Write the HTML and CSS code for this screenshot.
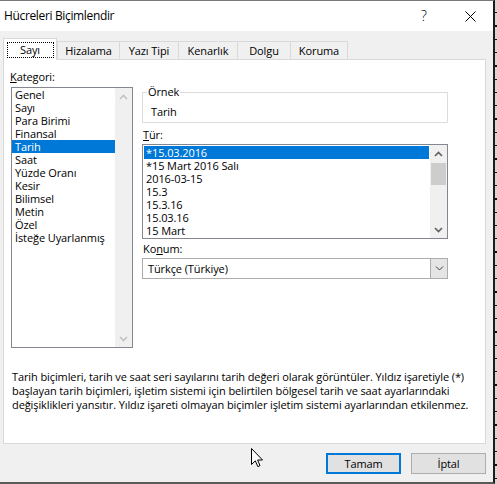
FILE: index.html
```html
<!DOCTYPE html>
<html lang="tr">
<head>
<meta charset="utf-8">
<title>Hücreleri Biçimlendir</title>
<link rel="stylesheet" href="styles.css">
</head>
<body>
<div class="dialog">
  <div class="titlebar">
    <span class="title">Hücreleri Biçimlendir</span>
    <span class="caption-btn help">?</span>
    <span class="caption-btn close">
      <svg width="11" height="11" viewBox="0 0 11 11"><path d="M0.5 0.5 L10.5 10.5 M10.5 0.5 L0.5 10.5" stroke="#000" stroke-width="1" fill="none"/></svg>
    </span>
  </div>
  <div class="content">
    <div class="tabs">
      <div class="tab active tab-sayi"><span class="focus">Sayı</span></div>
      <div class="tab tab-hiz">Hizalama</div>
      <div class="tab tab-yazi">Yazı Tipi</div>
      <div class="tab tab-ken">Kenarlık</div>
      <div class="tab tab-dol">Dolgu</div>
      <div class="tab tab-kor">Koruma</div>
    </div>
    <div class="panel">
      <div class="cols">
        <div class="left">
          <div class="label label-kat"><u>K</u>ategori:</div>
          <div class="listbox cat">
            <ul class="items">
              <li>Genel</li>
              <li>Sayı</li>
              <li>Para Birimi</li>
              <li>Finansal</li>
              <li class="sel">Tarih</li>
              <li>Saat</li>
              <li>Yüzde Oranı</li>
              <li>Kesir</li>
              <li>Bilimsel</li>
              <li>Metin</li>
              <li>Özel</li>
              <li>İsteğe Uyarlanmış</li>
            </ul>
            <div class="scrollbar disabled">
              <span class="sbtn"><svg width="9" height="6" viewBox="0 0 9 6"><path d="M1 5 L4.5 1.5 L8 5" fill="none" stroke="#c2c2c2" stroke-width="1.6"/></svg></span>
              <span class="track"></span>
              <span class="sbtn"><svg width="9" height="6" viewBox="0 0 9 6"><path d="M1 1 L4.5 4.5 L8 1" fill="none" stroke="#c2c2c2" stroke-width="1.6"/></svg></span>
            </div>
          </div>
        </div>
        <div class="right">
          <div class="group">
            <span class="legend">Örnek</span>
            <div class="sample">Tarih</div>
          </div>
          <div class="label label-tur"><u>T</u>ür:</div>
          <div class="listbox tur">
            <ul class="items">
              <li class="sel">*15.03.2016</li>
              <li>*15 Mart 2016 Salı</li>
              <li>2016-03-15</li>
              <li>15.3</li>
              <li>15.3.16</li>
              <li>15.03.16</li>
              <li>15 Mart</li>
            </ul>
            <div class="scrollbar">
              <span class="sbtn"><svg width="9" height="6" viewBox="0 0 9 6"><path d="M1 5 L4.5 1.5 L8 5" fill="none" stroke="#606060" stroke-width="1.6"/></svg></span>
              <span class="track"><span class="thumb"></span></span>
              <span class="sbtn"><svg width="9" height="6" viewBox="0 0 9 6"><path d="M1 1 L4.5 4.5 L8 1" fill="none" stroke="#606060" stroke-width="1.6"/></svg></span>
            </div>
          </div>
          <div class="label label-kon">Ko<u>n</u>um:</div>
          <div class="combo">
            <span class="combo-text">Türkçe (Türkiye)</span>
            <span class="combo-btn"><svg width="9" height="5" viewBox="0 0 9 5"><path d="M1 0.5 L4.5 4 L8 0.5" fill="none" stroke="#404040" stroke-width="1"/></svg></span>
          </div>
        </div>
      </div>
      <p class="desc">Tarih biçimleri, tarih ve saat seri sayılarını tarih değeri olarak görüntüler. Yıldız işaretiyle (*)<br>başlayan tarih biçimleri, işletim sistemi için belirtilen bölgesel tarih ve saat ayarlarındaki<br>değişiklikleri yansıtır. Yıldız işareti olmayan biçimler işletim sistemi ayarlarından etkilenmez.</p>
    </div>
    <div class="buttons">
      <button class="btn default">Tamam</button>
      <button class="btn">İptal</button>
    </div>
  </div>
  <svg class="cursor" width="13" height="20" viewBox="0 0 13 20"><path d="M0.5 0.5 L0.5 16.5 L4.3 12.8 L6.8 18.6 L9 17.6 L6.6 12 L11.5 12 Z" fill="#fff" stroke="#000" stroke-width="1" stroke-linejoin="miter"/></svg>
</div>
</body>
</html>
```
FILE: styles.css
```css
* { box-sizing: border-box; }
html, body { margin: 0; padding: 0; }
body {
  font-family: "Open Sans", "Noto Sans", sans-serif;
  font-size: 11px;
  letter-spacing: -0.1px;
  color: #000;
  background: repeating-linear-gradient(to bottom, #d6d6d6 0, #d6d6d6 12px, #111 12px, #111 13.3px);
  width: 497px;
  height: 484px;
  overflow: hidden;
}
.dialog {
  position: relative;
  width: 495px;
  height: 484px;
  background: #f0f0f0;
  border-top: 1px solid #7a7a7a;
  border-right: 2px solid #1c1c1c;
  border-bottom: 2px solid #5a5a5a;
  display: flex;
  flex-direction: column;
}
.titlebar {
  height: 30px;
  background: #fff;
  display: flex;
  align-items: center;
  padding-left: 4px;
}
.title {
  font-size: 12px;
  letter-spacing: -0.35px;
  line-height: 16px;
}
.caption-btn {
  width: 46px;
  height: 30px;
  display: flex;
  align-items: center;
  justify-content: center;
}
.help {
  margin-left: auto;
  font-size: 14px;
  line-height: 16px;
  font-weight: 300;
}
.content {
  flex: 1;
  padding: 7px 7px 0 3px;
  display: flex;
  flex-direction: column;
}
.tabs {
  display: flex;
  align-items: flex-end;
  height: 22px;
  margin-bottom: -1px;
  position: relative;
  z-index: 1;
}
.tab {
  height: 18px;
  margin-bottom: 1px;
  border: 1px solid #d9d9d9;
  border-bottom: none;
  background: #f0f0f0;
  text-align: center;
  line-height: 17px;
  margin-left: -1px;
}
.tab.active {
  height: 22px;
  margin-bottom: 0;
  margin-left: 0;
  background: #fff;
  display: flex;
  justify-content: center;
  align-items: flex-start;
  padding-top: 3px;
}
.focus {
  display: block;
  width: 47px;
  height: 16px;
  line-height: 14px;
  border: 1px dotted #000;
  text-align: center;
}
.tab-sayi { width: 54px; }
.tab-hiz { width: 63px; margin-left: 0; }
.tab-yazi { width: 60px; }
.tab-ken { width: 60px; }
.tab-dol { width: 54px; }
.tab-kor { width: 58px; }
.panel {
  width: 483px;
  height: 385px;
  background: #fff;
  border: 1px solid #d9d9d9;
}
.cols {
  display: flex;
}
.left {
  margin-left: 7px;
  width: 122px;
}
.right {
  margin-left: 9px;
  width: 306px;
}
.label {
  line-height: 13px;
  white-space: nowrap;
}
.label u { text-decoration-thickness: 1px; text-underline-offset: 1px; }
.label-kat { margin-top: 10px; margin-left: -1px; }
.label-tur { margin-top: 5px; margin-left: 1px; }
.label-kon { margin-top: 3px; margin-left: 1px; }
.listbox {
  display: flex;
  border: 1px solid #828790;
  background: #fff;
}
.listbox.cat { margin-top: 4px; height: 261px; }
.listbox.tur { margin-top: 3px; height: 95px; }
.items {
  flex: 1;
  list-style: none;
  margin: 0;
  padding: 0;
  overflow: hidden;
}
.tur .items { padding: 1px 1px 0 1px; }
.items li {
  height: 13px;
  line-height: 13px;
  padding-left: 3px;
  white-space: nowrap;
}
.tur .items li { padding-left: 2px; }
.items li.sel {
  background: #0078d7;
  color: #fff;
}
.scrollbar {
  width: 17px;
  background: #f0f0f0;
  display: flex;
  flex-direction: column;
}
.sbtn {
  height: 17px;
  display: flex;
  align-items: center;
  justify-content: center;
}
.track {
  flex: 1;
}
.thumb {
  display: block;
  margin: 1px 1px 0 1px;
  height: 22px;
  background: #cdcdcd;
}
.group {
  position: relative;
  margin-top: 32px;
  height: 31px;
  border: 1px solid #dcdcdc;
}
.legend {
  position: absolute;
  left: 4px;
  top: -8px;
  padding: 0 1px;
  line-height: 13px;
  background: #fff;
}
.sample {
  padding: 12px 0 0 8px;
  line-height: 13px;
}
.combo {
  margin-top: 3px;
  height: 21px;
  display: flex;
  border: 1px solid #acacac;
  background: #fff;
}
.combo-text {
  flex: 1;
  padding-left: 5px;
  line-height: 19px;
}
.combo-btn {
  width: 17px;
  background: #e5e5e5;
  border-left: 1px solid #acacac;
  display: flex;
  align-items: center;
  justify-content: center;
}
.desc {
  margin: 22px 0 0 0;
  padding-left: 8px;
  line-height: 14px;
  white-space: nowrap;
}
.buttons {
  margin-top: 9px;
  display: flex;
  justify-content: flex-end;
  gap: 10px;
}
.btn {
  width: 75px;
  height: 21px;
  padding: 0;
  font: inherit;
  letter-spacing: inherit;
  color: #000;
  background: #e1e1e1;
  border: 1px solid #adadad;
  line-height: 17px;
}
.btn.default {
  border: 2px solid #0078d7;
}
.cursor {
  position: absolute;
  left: 251px;
  top: 447px;
}
```
